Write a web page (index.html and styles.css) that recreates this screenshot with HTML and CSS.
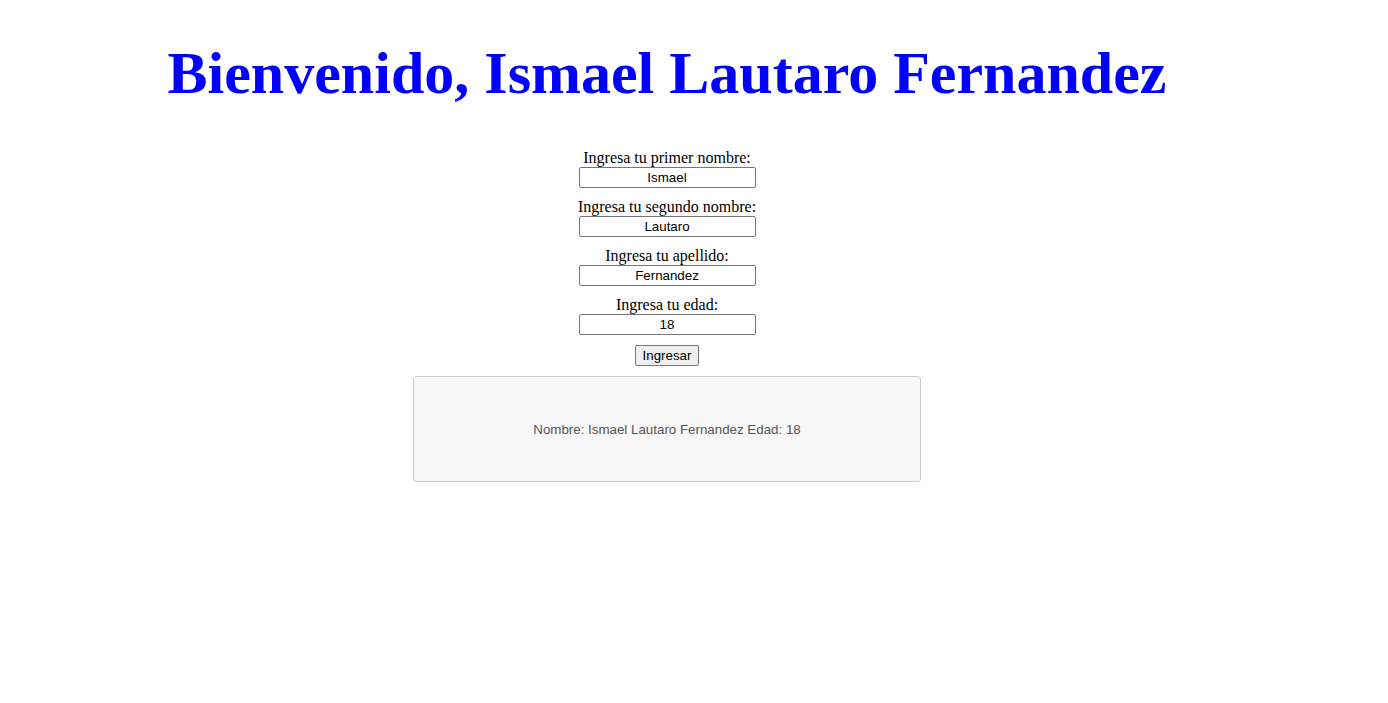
FILE: index.html
```html
<!DOCTYPE html>
<html lang="es">
<head>
<meta charset="utf-8">
<title>Bienvenido</title>
<link rel="stylesheet" href="styles.css">
</head>
<body>
<main class="page">
  <h1 class="title">Bienvenido, Ismael Lautaro Fernandez</h1>
  <form class="form">
    <div class="field">
      <label class="label" for="n1">Ingresa tu primer nombre:</label>
      <input class="input" id="n1" type="text" value="Ismael">
    </div>
    <div class="field">
      <label class="label" for="n2">Ingresa tu segundo nombre:</label>
      <input class="input" id="n2" type="text" value="Lautaro">
    </div>
    <div class="field">
      <label class="label" for="ap">Ingresa tu apellido:</label>
      <input class="input" id="ap" type="text" value="Fernandez">
    </div>
    <div class="field">
      <label class="label" for="ed">Ingresa tu edad:</label>
      <input class="input" id="ed" type="text" value="18">
    </div>
    <button class="button" type="button">Ingresar</button>
  </form>
  <div class="result">Nombre: Ismael Lautaro Fernandez Edad: 18</div>
</main>
</body>
</html>
```
FILE: styles.css
```css
html, body {
  margin: 0;
  padding: 0;
  background: #fff;
}
body {
  font-family: "Liberation Serif", "Times New Roman", serif;
  font-size: 16px;
  color: #000;
}
.page {
  width: 1334px;
  display: flex;
  flex-direction: column;
  align-items: center;
  padding-top: 1px;
}
.title {
  font-family: "Liberation Serif", "Times New Roman", serif;
  font-weight: bold;
  font-size: 60px;
  color: #0000ff;
  margin: 35px 0 0 0;
  line-height: 74px;
  text-align: center;
}
.form {
  margin-top: 39px;
  display: flex;
  flex-direction: column;
  align-items: center;
}
.field {
  display: flex;
  flex-direction: column;
  align-items: center;
  margin-bottom: 10px;
}
.label {
  line-height: 18px;
  height: 18px;
}
.input {
  box-sizing: border-box;
  width: 177px;
  height: 21px;
  border: 1px solid #767676;
  border-radius: 2px;
  padding: 1px 2px;
  font-family: "Liberation Sans", Arial, sans-serif;
  font-size: 13.333px;
  text-align: center;
  color: #000;
  background: #fff;
}
.button {
  box-sizing: border-box;
  height: 21px;
  width: 64px;
  margin-top: 0;
  padding: 1px 6px;
  font-family: "Liberation Sans", Arial, sans-serif;
  font-size: 13.333px;
  color: #000;
  background: #efefef;
  border: 1px solid #767676;
  border-radius: 2px;
}
.result {
  box-sizing: border-box;
  margin-top: 10px;
  width: 508px;
  height: 106px;
  background: #f7f7f7;
  border: 1px solid #cccccc;
  border-radius: 3px;
  display: flex;
  align-items: center;
  justify-content: center;
  font-family: "Liberation Sans", Arial, sans-serif;
  font-size: 13.333px;
  color: #555;
}
```
